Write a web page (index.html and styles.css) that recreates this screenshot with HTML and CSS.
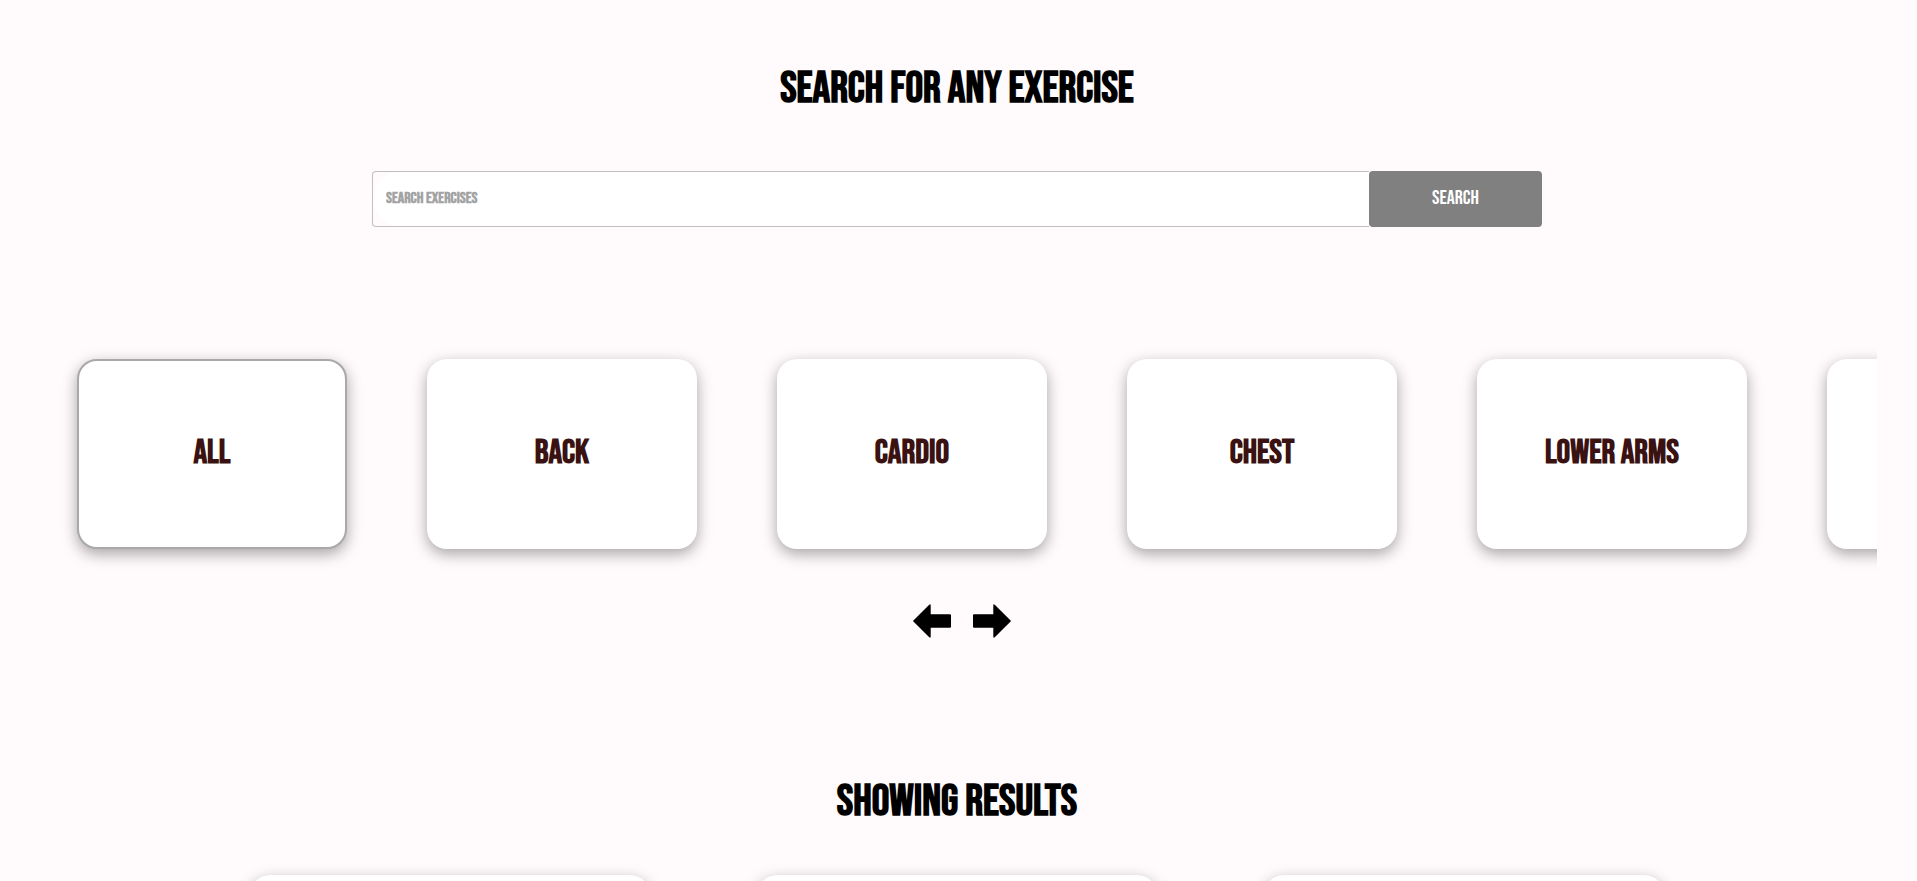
FILE: index.html
```
<!DOCTYPE html>
<html lang="en">
<head>
<meta charset="utf-8">
<title>Exercise search</title>
<link rel="stylesheet" href="styles.css">
</head>
<body>
<main class="page">
  <h1 class="heading">SEARCH FOR ANY EXERCISE</h1>
  <form class="search">
    <div class="search-field">
      <input class="search-input" type="text" aria-label="Search exercises" placeholder="SEARCH EXERCISES">
    </div>
    <button class="search-button" type="submit">SEARCH</button>
  </form>
  <div class="categories">
    <button class="category category-active" type="button">ALL</button>
    <button class="category" type="button">BACK</button>
    <button class="category" type="button">CARDIO</button>
    <button class="category" type="button">CHEST</button>
    <button class="category" type="button">LOWER ARMS</button>
    <button class="category" type="button" aria-label="Next category"></button>
  </div>
  <nav class="arrows" aria-label="Scroll categories">
    <button class="arrow" type="button" aria-label="Previous">
      <svg viewBox="0 0 38 34"><path d="M.4 16.400L16 .9Q17.700-.4 17.700 1.500V10.300H37Q38 10.300 38 11.300V22.700Q38 23.700 37 23.700H17.700V32.500Q17.700 34.400 16 33.100L.4 17.600Q-.2 17 .4 16.400Z"/></svg>
    </button>
    <button class="arrow" type="button" aria-label="Next">
      <svg viewBox="0 0 38 34"><path d="M37.600 16.400L22 .9Q20.300-.4 20.300 1.500V10.300H1Q0 10.300 0 11.300V22.700Q0 23.700 1 23.700H20.300V32.500Q20.300 34.400 22 33.100L37.600 17.600Q38.200 17 37.600 16.400Z"/></svg>
    </button>
  </nav>
  <h2 class="heading heading-results">SHOWING RESULTS</h2>
  <section class="results">
    <article class="result"></article>
    <article class="result"></article>
    <article class="result"></article>
  </section>
</main>
</body>
</html>
```
FILE: styles.css
```
* { box-sizing: border-box; }
html { overflow: hidden; }
body {
  margin: 0;
  height: 100vh;
  overflow: hidden;
  background: #fffafb;
  color: #000;
  font-family: "Bebas Neue", "Roboto Condensed", "Open Sans Condensed", "Liberation Sans Narrow", Roboto, sans-serif;
}
button, input { font-family: inherit; }
.page {
  display: flex;
  flex-direction: column;
  align-items: center;
  padding: 63px 3px 0 0;
}
.heading {
  margin: 0;
  font-size: 44px;
  line-height: 52px;
  font-weight: 700;
}
.search {
  display: flex;
  width: 100%;
  max-width: 1170px;
  height: 56px;
  margin-top: 56px;
}
.search-field {
  flex: 1;
  display: flex;
  border: 1px solid #c2bfc0;
  border-right: 0;
  border-radius: 4px 0 0 4px;
}
.search-input {
  flex: 1;
  min-width: 0;
  padding: 0 13px 2px;
  border: 0;
  border-radius: 40px 0 0 40px;
  background: #fff;
  font-size: 16px;
  font-weight: 700;
}
.search-input::placeholder { color: #a3a3a3; opacity: 1; }
.search-button {
  width: 173px;
  padding: 0 0 2px;
  border: 0;
  border-radius: 4px;
  background: #808080;
  color: #fff;
  font-size: 20px;
  font-weight: 500;
}
.categories {
  display: flex;
  gap: 80px;
  align-self: stretch;
  margin: 92px 37px 0 40px;
  padding: 40px 0 40px 37px;
  overflow: hidden;
}
.category {
  flex: none;
  width: 270px;
  height: 190px;
  padding: 0 0 4px;
  border: 0;
  border-radius: 20px;
  background: #fff;
  color: #3a1212;
  font-size: 34px;
  font-weight: 700;
  box-shadow: 0 5px 15px rgba(0, 0, 0, 0.35);
}
.category-active { border: 2px solid #a9a9a9; }
.arrows {
  display: flex;
  gap: 22px;
  margin: 15px 0 0 10px;
}
.arrow {
  width: 38px;
  height: 34px;
  padding: 0;
  border: 0;
  background: none;
}
.arrow svg { display: block; width: 100%; }
.heading-results { margin-top: 138px; }
.results {
  display: flex;
  gap: 107px;
  margin-top: 47px;
}
.result {
  width: 400px;
  height: 500px;
  border-radius: 20px;
  background: #fff;
  box-shadow: 0 5px 15px rgba(0, 0, 0, 0.35);
}
```
